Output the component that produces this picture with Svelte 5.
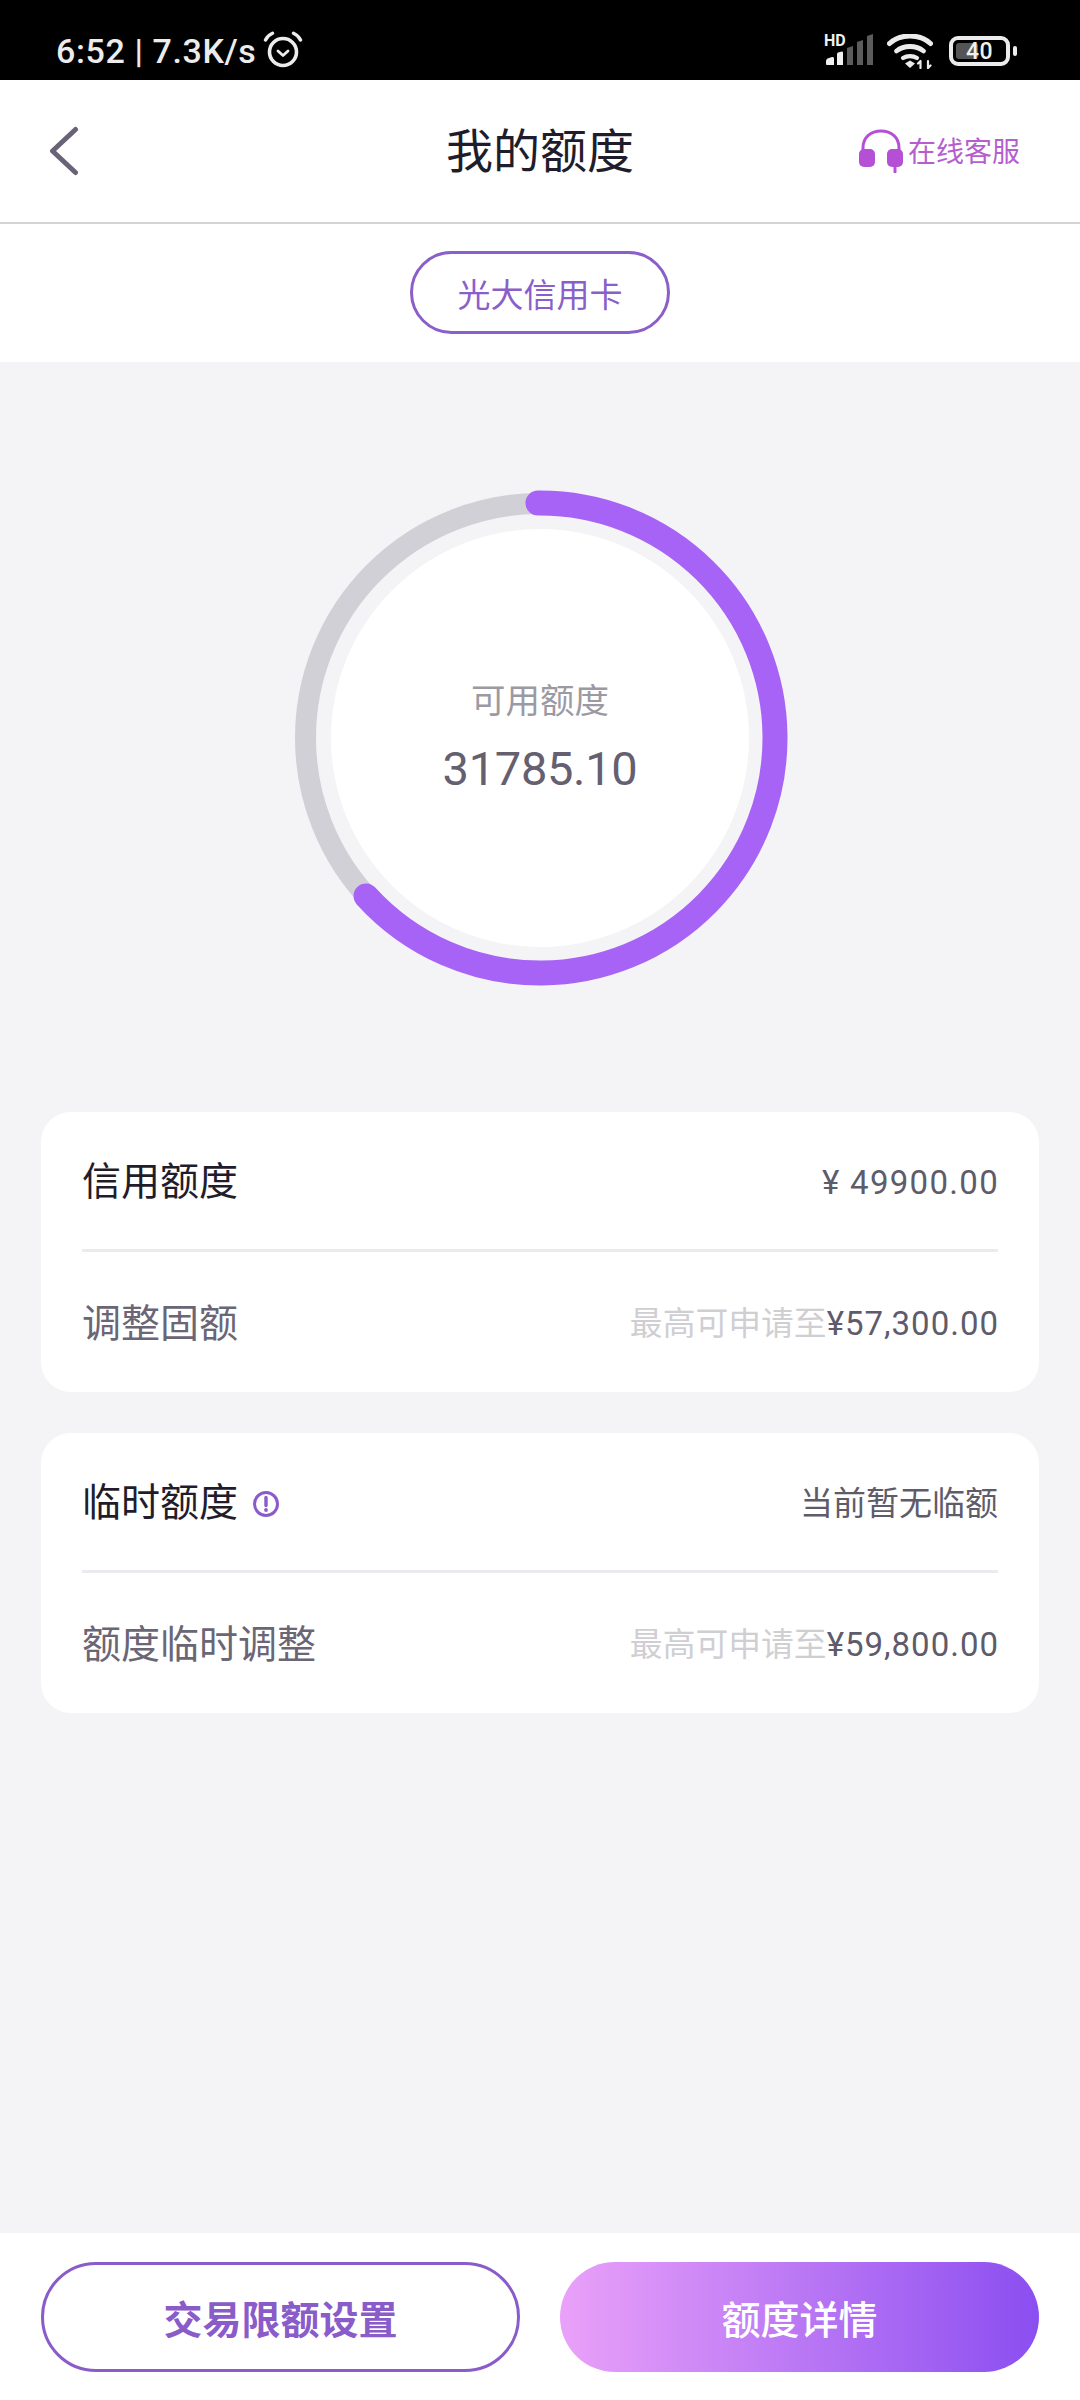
<script>
  const limit = 49900;
  const available = 31785.1;
  const r = 235;
  const circ = 2 * Math.PI * r;
  // the arc stops a touch short of the real ratio, cap included
  const dash = (available / limit) * 0.995 * circ;
</script>

<div class="page">
  <div class="statusbar">
    <div class="status-left">
      <span class="time">6:52 | 7.3K/s</span>
      <svg class="alarm" width="40" height="37" viewBox="0 0 40 37" fill="none" stroke="#ececec" stroke-linecap="round">
        <circle cx="20" cy="21" r="13.500" stroke-width="3.600" />
        <path d="M15 20l5 4.500 5-4.500" stroke-width="2.800" stroke-linejoin="round" />
        <path d="M2.500 9C4 5.500 6.500 3.500 9.500 2.200M37.500 9C36 5.500 33.500 3.500 30.500 2.200" stroke-width="3.400" />
      </svg>
    </div>
    <div class="status-right">
      <div class="signal">
        <span class="hd">HD</span>
        <svg width="48" height="32" viewBox="0 0 48 32">
          <path d="M0 27q0-1.500 1.500-2.500L6 23q2-.5 2 1.500V31H1q-1 0-1-1z" fill="#f0f0f0" />
          <path d="M11 20q0-1 1-1.500l4-1q1 0 1 1V31h-6z" fill="#f0f0f0" />
          <path d="M21 14l6-2v19h-6z" fill="#5c5c5c" />
          <path d="M31 8l6-2v25h-6z" fill="#5c5c5c" />
          <path d="M41 2l6-2v31h-6z" fill="#5c5c5c" />
        </svg>
      </div>
      <svg class="wifi" width="46" height="35" viewBox="0 0 46 35" fill="none" stroke="#ececec" stroke-linecap="round">
        <path d="M2.500 9.500C13-.5 33-.5 43.500 9.500" stroke-width="5" />
        <path d="M9.500 17C17 11 29 11 36.500 17" stroke-width="4.800" />
        <path d="M16 24C20 21.500 26 21.500 30 24" stroke-width="4.200" />
        <path d="M18 29.500l5-3 5 3-5 4.500z" fill="#ececec" stroke="none" />
        <path d="M33.500 34v-7m-2.500 2.500l2.500-2.500M41 27v7m2.500-2.500L41 34" stroke-width="2.200" />
      </svg>
      <div class="battery">
        <div class="battery-body">
          <div class="battery-fill"></div>
          <span class="battery-num">40</span>
        </div>
        <div class="battery-nub"></div>
      </div>
    </div>
  </div>

  <header class="topbar">
    <svg class="back" width="30" height="50" viewBox="0 0 30 50" fill="none">
      <path d="M26.500 3.500L3.500 25l23 21.500" stroke="#6a6378" stroke-width="5" stroke-linecap="round" stroke-linejoin="round" />
    </svg>
    <h1>我的额度</h1>
    <div class="service">
      <svg width="46" height="44" viewBox="0 0 46 44" fill="none">
        <path d="M5 22V19C5 8 13 2 23 2s18 6 18 17v3" stroke="#b44fd6" stroke-width="3" />
        <rect x="1" y="20" width="16" height="18" rx="5" fill="#b44fd6" />
        <rect x="29" y="20" width="16" height="18" rx="5" fill="#b44fd6" />
        <path d="M37 36v7" stroke="#b44fd6" stroke-width="3" stroke-linecap="round" />
      </svg>
      <span>在线客服</span>
    </div>
  </header>

  <div class="cardtabs">
    <div class="pill">光大信用卡</div>
  </div>

  <main class="content">
    <div class="gauge">
      <svg width="500" height="500" viewBox="0 0 500 500" fill="none">
        <circle cx="250" cy="250" r="234.500" stroke="#d1d0d6" stroke-width="21" />
        <circle cx="250" cy="250" r="209" fill="#fff" />
        <circle
          cx="250"
          cy="250"
          {r}
          stroke="#a763f5"
          stroke-width="25"
          stroke-linecap="round"
          stroke-dasharray="{dash} {circ}"
          transform="rotate(-90.5 250 250)"
        />
      </svg>
      <div class="gauge-text">
        <div class="gauge-label">可用额度</div>
        <div class="gauge-value">31785.10</div>
      </div>
    </div>

    <section class="card">
      <div class="row">
        <span class="label">信用额度</span>
        <span class="value">¥ 49900.00</span>
      </div>
      <div class="row">
        <span class="label sub">调整固额</span>
        <span class="value tight"><span class="hint">最高可申请至</span>¥57,300.00</span>
      </div>
    </section>

    <section class="card">
      <div class="row">
        <span class="label">
          临时额度
          <svg class="info" width="28" height="28" viewBox="0 0 28 28" fill="none">
            <circle cx="14" cy="14" r="11.500" stroke="#8a5cc9" stroke-width="3" />
            <path d="M14 7.500v8" stroke="#8a5cc9" stroke-width="3.400" stroke-linecap="round" />
            <circle cx="14" cy="20" r="1.900" fill="#8a5cc9" />
          </svg>
        </span>
        <span class="value cjk">当前暂无临额</span>
      </div>
      <div class="row">
        <span class="label sub">额度临时调整</span>
        <span class="value tight"><span class="hint">最高可申请至</span>¥59,800.00</span>
      </div>
    </section>
  </main>

  <footer class="actions">
    <button class="btn outline">交易限额设置</button>
    <button class="btn solid">额度详情</button>
  </footer>
</div>

<style>
  :global(body) {
    margin: 0;
    background: #f4f4f6;
  }
  .page {
    width: 1080px;
    height: 2400px;
    display: flex;
    flex-direction: column;
    font-family: Roboto, "Noto Sans CJK SC", sans-serif;
    background: #f4f4f6;
  }
  .statusbar {
    height: 80px;
    background: #000;
    display: flex;
    align-items: center;
    justify-content: space-between;
    padding: 22px 63px 0 56px;
    box-sizing: border-box;
    color: #ececec;
  }
  .status-left {
    display: flex;
    align-items: center;
    gap: 7px;
  }
  .time {
    font-size: 34px;
    font-weight: 500;
    line-height: 1;
    letter-spacing: 0.6px;
    white-space: nowrap;
  }
  .alarm {
    margin-bottom: 4px;
  }
  .status-right {
    display: flex;
    align-items: center;
    gap: 13px;
  }
  .signal {
    width: 48px;
    height: 32px;
    position: relative;
    margin-bottom: 2px;
  }
  .signal svg {
    display: block;
  }
  .hd {
    position: absolute;
    left: -2px;
    top: -1px;
    font-size: 16px;
    font-weight: 700;
    line-height: 1;
    color: #f0f0f0;
  }
  .battery {
    display: flex;
    align-items: center;
    gap: 3px;
    margin-left: 3px;
  }
  .battery-body {
    width: 61px;
    height: 30px;
    border: 4px solid #ececec;
    border-radius: 9px;
    box-sizing: border-box;
    position: relative;
    display: flex;
    align-items: center;
    justify-content: center;
  }
  .battery-fill {
    position: absolute;
    left: 3px;
    top: 3px;
    bottom: 3px;
    width: 22px;
    background: #555;
    border-radius: 3px;
  }
  .battery-num {
    position: relative;
    font-size: 23px;
    font-weight: 500;
    line-height: 1;
    color: #f0f0f0;
    letter-spacing: 0.5px;
  }
  .battery-nub {
    width: 4px;
    height: 10px;
    background: #ececec;
    border-radius: 2px;
  }
  .topbar {
    height: 144px;
    box-sizing: border-box;
    background: #fff;
    border-bottom: 2px solid #d4d4d6;
    display: flex;
    align-items: center;
    justify-content: space-between;
    padding: 0 60px 0 49px;
    position: relative;
  }
  h1 {
    position: absolute;
    left: 0;
    right: 0;
    top: 48px;
    margin: 0;
    text-align: center;
    font-size: 47px;
    font-weight: 400;
    color: #1f1d2b;
    line-height: 1;
  }
  .service {
    display: flex;
    align-items: center;
    gap: 4px;
    font-size: 28px;
    color: #b55fcf;
    line-height: 1;
  }
  .service span {
    padding-top: 4px;
  }
  .cardtabs {
    height: 138px;
    background: #fff;
    display: flex;
    justify-content: center;
    padding-top: 27px;
    box-sizing: border-box;
  }
  .pill {
    width: 260px;
    height: 83px;
    box-sizing: border-box;
    border: 3px solid #8a5fc9;
    border-radius: 42px;
    display: flex;
    align-items: center;
    justify-content: center;
    font-size: 33px;
    color: #8a5fc9;
  }
  .content {
    flex: 1;
    display: flex;
    flex-direction: column;
    align-items: center;
    padding-top: 126px;
    box-sizing: border-box;
  }
  .gauge {
    width: 500px;
    height: 500px;
    position: relative;
    margin-bottom: 124px;
  }
  .gauge svg {
    display: block;
  }
  .gauge-text {
    position: absolute;
    inset: 0;
    display: flex;
    flex-direction: column;
    align-items: center;
    justify-content: center;
  }
  .gauge-label {
    font-size: 34.500px;
    line-height: 1;
    color: #9b9aa3;
    margin-bottom: 26px;
  }
  .gauge-value {
    font-size: 47px;
    line-height: 1;
    letter-spacing: -0.3px;
    color: #655f70;
  }
  .card {
    width: 998px;
    box-sizing: border-box;
    background: #fff;
    border-radius: 30px;
    padding: 0 41px;
    margin-bottom: 41px;
  }
  .row {
    height: 140px;
    display: flex;
    align-items: center;
    justify-content: space-between;
    box-sizing: border-box;
    padding-top: 4px;
  }
  .row:first-child {
    border-bottom: 3px solid #ebebef;
  }
  .label {
    font-size: 39px;
    line-height: 1;
    color: #1f1d2b;
    display: flex;
    align-items: center;
    gap: 14px;
  }
  .label.sub {
    color: #6a6675;
  }
  .value {
    font-size: 33px;
    line-height: 1;
    color: #5e5b6b;
    letter-spacing: 1.300px;
    margin-right: -1px;
    white-space: nowrap;
  }
  .value.tight {
    letter-spacing: 1px;
  }
  .value.cjk {
    letter-spacing: 0;
    margin-right: 0;
  }
  .hint {
    color: #cfcfd3;
    letter-spacing: 0;
    font-size: 32.800px;
  }
  .actions {
    height: 167px;
    box-sizing: border-box;
    background: #fff;
    display: flex;
    justify-content: space-between;
    padding: 29px 41px 0;
  }
  .btn {
    width: 479px;
    height: 110px;
    border-radius: 55px;
    box-sizing: border-box;
    font-family: inherit;
    font-size: 39px;
    font-weight: 700;
    padding: 0;
  }
  .btn.outline {
    background: #fff;
    border: 3px solid #8a5cc9;
    color: #8a5cc9;
  }
  .btn.solid {
    border: 0;
    color: #fff;
    background: linear-gradient(90deg, #eaa1f9, #8b4ef0);
    font-weight: 500;
  }
</style>
